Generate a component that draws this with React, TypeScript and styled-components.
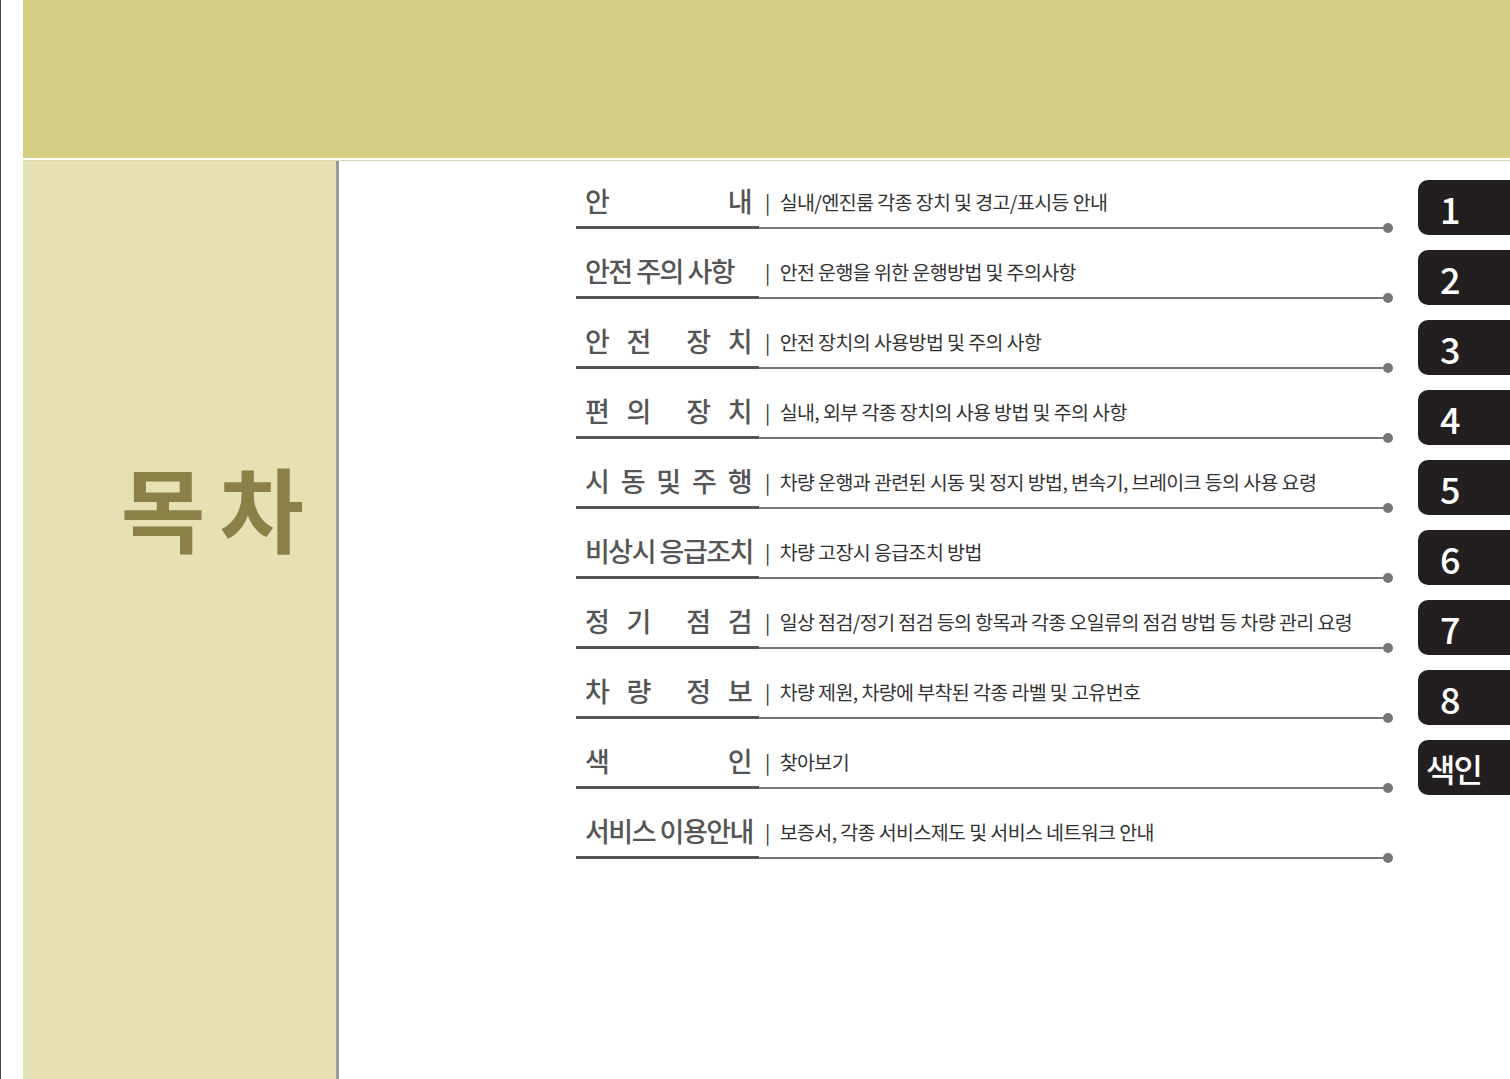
import React from "react";
import styled, { createGlobalStyle } from "styled-components";

const G = createGlobalStyle`
  html,body{margin:0;padding:0;background:#fff;}
  body{font-family:"Noto Sans CJK KR","Noto Sans",sans-serif;}
`;
const Page = styled.div`
  width:1510px;height:1079px;display:flex;flex-direction:column;
  padding-left:22px;box-sizing:border-box;overflow:hidden;
  border-left:1px solid #444;
`;
const Banner = styled.div`height:158px;background:#d6cd85;flex:none;`;
const Sep = styled.div`height:2px;background:#fff;border-bottom:1px solid #ddd7b0;flex:none;`;
const Body = styled.div`flex:1;display:flex;`;
const Side = styled.div`
  width:316px;background:#e6e0b5;border-right:3px solid #999;box-sizing:border-box;
  display:flex;align-items:flex-start;justify-content:flex-end;padding:290px 18px 0 0;
`;
const Title = styled.div`
  font-size:92px;font-weight:700;color:#8a8048;letter-spacing:14px;line-height:1.2;
`;
const Main = styled.div`flex:1;display:flex;`;
const List = styled.div`width:812px;margin-left:237px;display:flex;flex-direction:column;margin-top:-2px;`;
const Row = styled.div`height:70px;display:flex;align-items:flex-end;position:relative;`;
const Head = styled.div`
  width:183px;height:50px;border-bottom:3px solid #555;display:flex;justify-content:space-between;
  align-items:center;padding:0 8px 4px 9px;box-sizing:border-box;font-size:27px;font-weight:500;color:#555;
  white-space:nowrap;letter-spacing:-1.5px;
`;
const Rest = styled.div`
  flex:1;height:50px;border-bottom:2px solid #777;display:flex;align-items:center;padding-bottom:4px;
  box-sizing:border-box;font-size:19.5px;color:#333;position:relative;white-space:nowrap;letter-spacing:-0.6px;
`;
const Bar = styled.span`margin:0 10px 0 6px;color:#333;`;
const Dot = styled.span`
  position:absolute;right:-5px;bottom:-6px;width:10px;height:10px;border-radius:50%;background:#777;
`;
const Tabs = styled.div`margin-left:auto;display:flex;flex-direction:column;gap:15px;padding-top:19px;`;
const Tab = styled.div<{ $w?: boolean }>`
  width:92px;height:55px;background:#231f20;border-radius:10px 0 0 10px;color:#fff;
  display:flex;align-items:center;padding-left:${p=>p.$w?8:22}px;box-sizing:border-box;
  font-family:"Noto Sans CJK KR","DejaVu Sans Condensed",sans-serif;font-size:${p=>p.$w?32:36}px;font-weight:500;
  letter-spacing:${p=>p.$w?-2:0}px;
`;

const rows: [string[], string][] = [
  [["안","내"],"실내/엔진룸 각종 장치 및 경고/표시등 안내"],
  [["안전 주의 사항"],"안전 운행을 위한 운행방법 및 주의사항"],
  [["안","전","","장","치"],"안전 장치의 사용방법 및 주의 사항"],
  [["편","의","","장","치"],"실내, 외부 각종 장치의 사용 방법 및 주의 사항"],
  [["시","동","및","주","행"],"차량 운행과 관련된 시동 및 정지 방법, 변속기, 브레이크 등의 사용 요령"],
  [["비상시 응급조치"],"차량 고장시 응급조치 방법"],
  [["정","기","","점","검"],"일상 점검/정기 점검 등의 항목과 각종 오일류의 점검 방법 등 차량 관리 요령"],
  [["차","량","","정","보"],"차량 제원, 차량에 부착된 각종 라벨 및 고유번호"],
  [["색","인"],"찾아보기"],
  [["서비스 이용안내"],"보증서, 각종 서비스제도 및 서비스 네트워크 안내"],
];
const tabs=["1","2","3","4","5","6","7","8","색인"];

export default function App(){
  return <Page><G/>
    <Banner/><Sep/>
    <Body>
      <Side><Title>목차</Title></Side>
      <Main>
        <List>{rows.map(([h,t],i)=>
          <Row key={i}>
            <Head>{h.map((c,j)=><span key={j}>{c}</span>)}</Head>
            <Rest><Bar>|</Bar>{t}<Dot/></Rest>
          </Row>)}
        </List>
        <Tabs>{tabs.map(t=><Tab key={t} $w={t.length>1}>{t}</Tab>)}</Tabs>
      </Main>
    </Body>
  </Page>;
}
